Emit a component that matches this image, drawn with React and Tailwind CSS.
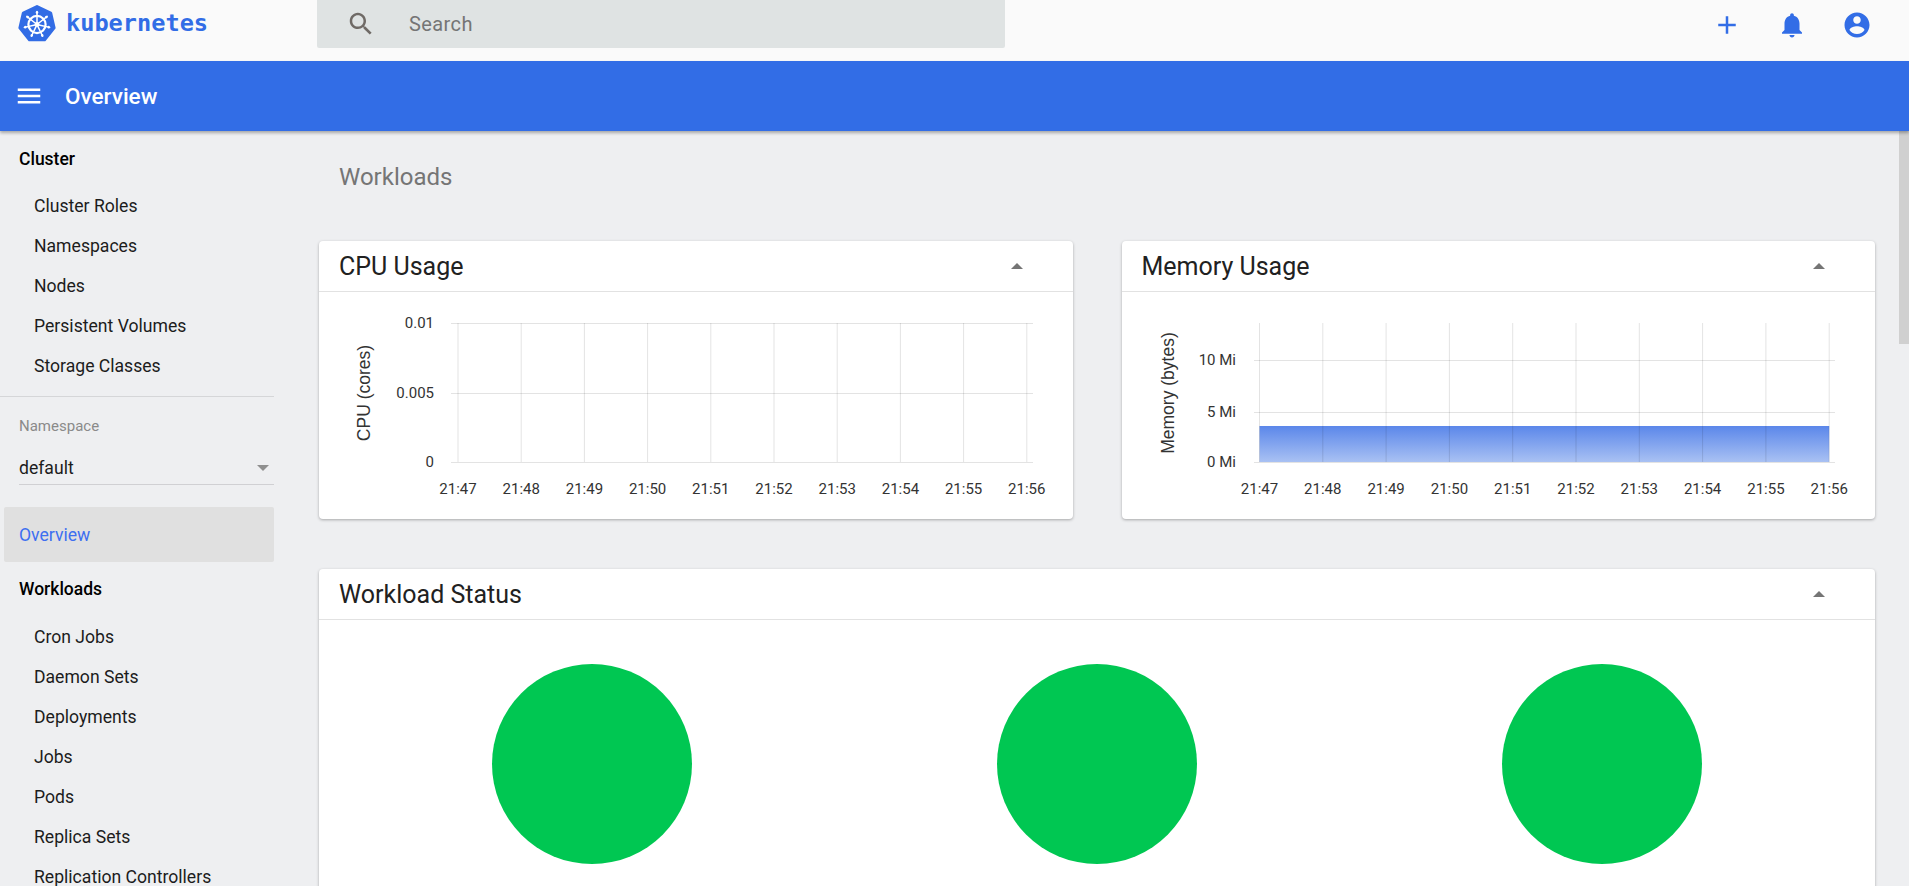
import React from "react";

const clusterItems = ["Cluster Roles", "Namespaces", "Nodes", "Persistent Volumes", "Storage Classes"];
const workloadItems = ["Cron Jobs", "Daemon Sets", "Deployments", "Jobs", "Pods", "Replica Sets", "Replication Controllers"];
const times = ["21:47", "21:48", "21:49", "21:50", "21:51", "21:52", "21:53", "21:54", "21:55", "21:56"];

function MaterialIcon({ d, className }) {
  return (
    <svg viewBox="0 0 24 24" className={className} fill="currentColor">
      <path d={d} />
    </svg>
  );
}

const icons = {
  search: "M15.5 14h-.79l-.28-.27C15.41 12.59 16 11.11 16 9.5 16 5.91 13.09 3 9.5 3S3 5.91 3 9.5 5.91 16 9.5 16c1.61 0 3.09-.59 4.23-1.57l.27.28v.79l5 4.99L20.49 19l-4.99-5zm-6 0C7.01 14 5 11.99 5 9.5S7.01 5 9.5 5 14 7.01 14 9.5 11.99 14 9.5 14z",
  add: "M19 13h-6v6h-2v-6H5v-2h6V5h2v6h6v2z",
  bell: "M12 22c1.1 0 2-.9 2-2h-4c0 1.1.89 2 2 2zm6-6v-5c0-3.07-1.64-5.64-4.5-6.32V4c0-.83-.67-1.5-1.5-1.5s-1.5.67-1.5 1.5v.68C7.63 5.36 6 7.92 6 11v5l-2 2v1h16v-1l-2-2z",
  account: "M12 2C6.48 2 2 6.48 2 12s4.48 10 10 10 10-4.48 10-10S17.52 2 12 2zm0 3c1.66 0 3 1.34 3 3s-1.34 3-3 3-3-1.34-3-3 1.34-3 3-3zm0 14.2c-2.5 0-4.71-1.28-6-3.22.03-1.99 4-3.08 6-3.08 1.99 0 5.97 1.09 6 3.08-1.29 1.94-3.5 3.22-6 3.22z",
  menu: "M3 18h18v-2H3v2zm0-5h18v-2H3v2zm0-7v2h18V6H3z",
};

function Logo() {
  const spokes = [0, 1, 2, 3, 4, 5, 6].map((i) => (i * 360) / 7);
  return (
    <svg viewBox="0 0 38 38" className="h-[38px] w-[38px] shrink-0">
      <polygon
        points="19,1.5 32.7,8.1 36.1,22.9 26.6,34.8 11.4,34.8 1.9,22.9 5.3,8.1"
        fill="#326ce5"
        stroke="#326ce5"
        strokeWidth="3"
        strokeLinejoin="round"
      />
      <circle cx="19" cy="19.5" r="8.6" fill="none" stroke="#fff" strokeWidth="2.2" />
      {spokes.map((a) => (
        <g key={a} transform={`rotate(${a} 19 19.5)`}>
          <line x1="19" y1="17.5" x2="19" y2="6.5" stroke="#fff" strokeWidth="1.5" strokeLinecap="round" />
          <circle cx="19" cy="7.5" r="1.3" fill="#fff" />
        </g>
      ))}
      <circle cx="19" cy="19.5" r="2.4" fill="#fff" />
    </svg>
  );
}

function TopBar() {
  return (
    <header className="flex h-[61px] shrink-0 bg-[#fafafa] text-[#326de6]">
      <div className="flex h-[48px] w-[317px] shrink-0 items-center gap-[10px] pl-[18px]">
        <Logo />
        <span className="font-['DejaVu_Sans_Mono',monospace] text-[23.6px] font-bold leading-none">kubernetes</span>
      </div>
      <div className="flex h-[48px] w-[688px] items-center rounded-b-[2px] bg-[#dfe3e3] pl-[29px] text-[#757575]">
        <MaterialIcon d={icons.search} className="h-[30px] w-[30px] text-[#6f6a66]" />
        <span className="ml-[33px] text-[20px] tracking-[0.02em]">Search</span>
      </div>
      <div className="ml-auto flex h-[50px] items-center gap-[35px] pr-[37px]">
        <MaterialIcon d={icons.add} className="h-[30px] w-[30px]" />
        <MaterialIcon d={icons.bell} className="h-[30px] w-[30px]" />
        <MaterialIcon d={icons.account} className="h-[30px] w-[30px]" />
      </div>
    </header>
  );
}

function ToolBar() {
  return (
    <div className="relative z-10 flex h-[70px] shrink-0 items-center bg-[#326de6] pl-[14px] text-white shadow-[0_2px_3px_rgba(0,0,0,0.3)]">
      <MaterialIcon d={icons.menu} className="h-[30px] w-[30px]" />
      <span className="ml-[21px] pt-[1px] text-[22.5px] font-medium">Overview</span>
    </div>
  );
}

function NavHeading({ children }) {
  return <div className="flex h-[40px] items-center pl-[19px] text-[17.5px] font-medium text-black">{children}</div>;
}

function NavItem({ children }) {
  return <div className="flex h-[40px] items-center pl-[34px] text-[17.6px] text-[#1c1c1c]">{children}</div>;
}

function Sidebar() {
  return (
    <aside className="w-[274px] shrink-0 overflow-hidden pt-[8px]">
      <NavHeading>Cluster</NavHeading>
      <div className="mt-[7px]">
        {clusterItems.map((it) => (
          <NavItem key={it}>{it}</NavItem>
        ))}
      </div>
      <div className="mt-[10px] border-t border-[#d5d6d8]" />
      <div className="pl-[19px] pt-[20px]">
        <div className="text-[15px] leading-[18px] text-[#8a8a8a]">Namespace</div>
        <div className="mt-[17px] flex h-[33px] items-center justify-between border-b border-[#d0d0d3]">
          <span className="text-[17.6px] text-[#1c1c1c]">default</span>
          <span className="mr-[5px] h-0 w-0 border-x-[6px] border-t-[6px] border-x-transparent border-t-[#8f8f8f]" />
        </div>
      </div>
      <div className="ml-[4px] mt-[22px] flex h-[55px] items-center rounded-[2px] bg-[#e0e0e0] pl-[15px] pt-[1px] text-[17.6px] text-[#3d6ff0]">
        Overview
      </div>
      <div className="mt-[7px]">
        <NavHeading>Workloads</NavHeading>
      </div>
      <div className="mt-[8px]">
        {workloadItems.map((it) => (
          <NavItem key={it}>{it}</NavItem>
        ))}
      </div>
    </aside>
  );
}

function Card({ title, children }) {
  return (
    <section className="rounded-[4px] bg-white shadow-[0_1px_3px_rgba(0,0,0,0.3)]">
      <div className="flex h-[51px] items-center justify-between border-b border-[#e2e2e2] pl-[20px] pr-[50px]">
        <h2 className="pt-[1px] text-[25px] font-normal text-[#212121]">{title}</h2>
        <span className="h-0 w-0 border-x-[6px] border-b-[6px] border-x-transparent border-b-[#757575]" />
      </div>
      {children}
    </section>
  );
}

function Chart({ x0, step, hEnd, yLines, top, title, titleX, labels, labelX, area }) {
  const bottom = yLines[yLines.length - 1];
  return (
    <svg width="100%" height="227" className="block font-['Roboto',sans-serif]">
      <defs>
        <linearGradient id="memArea" x1="0" y1="0" x2="0" y2="1">
          <stop offset="0" stopColor="#5b87ea" />
          <stop offset="1" stopColor="#a9c1f3" />
        </linearGradient>
      </defs>
      {area && <rect x={x0} y={area} width={step * 9} height={bottom - area} fill="url(#memArea)" />}
      {yLines.map((y) => (
        <line key={y} x1="132" x2={hEnd} y1={y + 0.5} y2={y + 0.5} stroke="#000" strokeOpacity="0.11" />
      ))}
      {times.map((t, i) => (
        <g key={t}>
          <line x1={x0 + i * step} x2={x0 + i * step} y1={top} y2={bottom} stroke="#000" strokeOpacity="0.11" />
          <text x={x0 + i * step} y="202" textAnchor="middle" fontSize="15" className="fill-[#333]">{t}</text>
        </g>
      ))}
      {labels.map((l, i) => (
        <text key={l} x={labelX} y={yLines[i] + 5} textAnchor="end" fontSize="15" className="fill-[#333]">{l}</text>
      ))}
      <text
        transform={`translate(${titleX} 101) rotate(-90)`}
        textAnchor="middle"
        fontSize="17.5"
        className="fill-[#333] font-['Liberation_Sans',sans-serif]"
      >
        {title}
      </text>
    </svg>
  );
}

function Scrollbar() {
  return (
    <div className="w-[10px] shrink-0 bg-[#eeeff1]">
      <div className="h-[213px] bg-[#d0d0d0]" />
    </div>
  );
}

export default function App() {
  return (
    <div className="flex h-screen flex-col overflow-hidden bg-[#eeeff1] font-['Roboto',sans-serif]">
      <TopBar />
      <ToolBar />
      <div className="flex min-h-0 flex-1">
        <Sidebar />
        <main className="min-w-0 flex-1 overflow-hidden pl-[45px] pr-[24px]">
          <h1 className="flex h-[110px] items-center pb-[19px] pl-[20px] text-[24px] font-normal text-[#757575]">Workloads</h1>
          <div className="grid grid-cols-2 gap-x-[49px]">
            <Card title="CPU Usage">
              <Chart
                x0={139}
                step={63.2}
                hEnd={714}
                top={31}
                yLines={[31, 101, 170]}
                labels={["0.01", "0.005", "0"]}
                labelX={115}
                title="CPU (cores)"
                titleX={51}
              />
            </Card>
            <Card title="Memory Usage">
              <Chart
                x0={137.5}
                step={63.3}
                hEnd={713}
                top={31}
                yLines={[68, 120, 170]}
                labels={["10 Mi", "5 Mi", "0 Mi"]}
                labelX={114}
                title="Memory (bytes)"
                titleX={52}
                area={134}
              />
            </Card>
          </div>
          <div className="mt-[50px]">
            <Card title="Workload Status">
              <div className="grid grid-cols-3 px-[20px] pb-[60px] pt-[44px]">
                {[0, 1, 2].map((i) => (
                  <div key={i} className="flex justify-center">
                    <div className="h-[200px] w-[200px] rounded-full bg-[#00c752]" />
                  </div>
                ))}
              </div>
            </Card>
          </div>
        </main>
        <Scrollbar />
      </div>
    </div>
  );
}
